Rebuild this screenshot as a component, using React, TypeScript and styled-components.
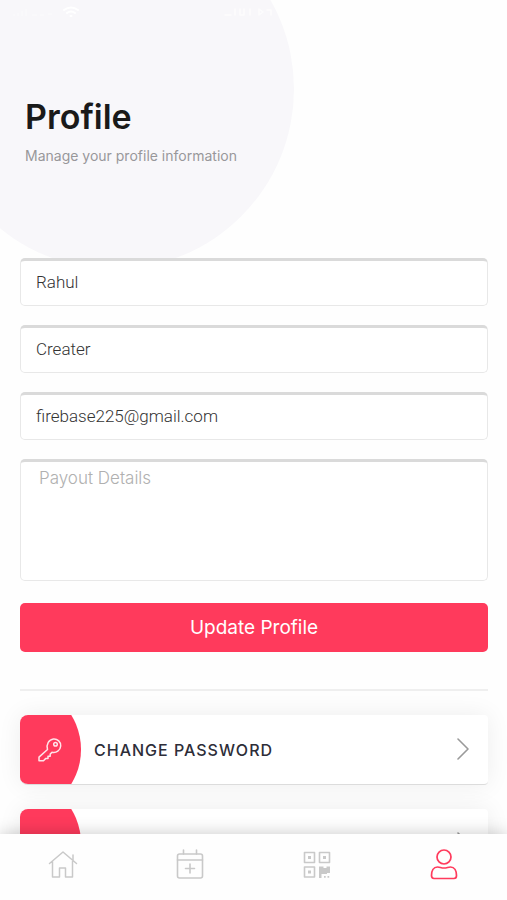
import React, { useState } from "react";
import styled, { createGlobalStyle } from "styled-components";

const accent = "#ff3a5c";

const GlobalStyle = createGlobalStyle`
  *, *::before, *::after { box-sizing: border-box; }
  html, body, #root { height: 100%; }
  body {
    margin: 0;
    background: #fefefe;
    font-family: Inter, Roboto, sans-serif;
    color: #1a1a1a;
    overflow: hidden;
  }
  button, input, textarea { font: inherit; margin: 0; }
`;

const Screen = styled.div`
  height: 100vh;
  display: flex;
  flex-direction: column;
  overflow: hidden;
`;

const Content = styled.main`
  position: relative;
  flex: 1;
  min-height: 0;
  overflow: hidden;
`;

const Blob = styled.div`
  position: absolute;
  z-index: -1;
  top: -91px;
  left: -66px;
  width: 360px;
  height: 360px;
  border-radius: 50%;
  background: #f8f7fa;
`;

const StatusBar = styled.div`
  display: flex;
  align-items: center;
  gap: 8px;
  height: 24px;
  padding: 0 12px;
  color: #fff;
`;

const StatusGroup = styled.span<{ $offset?: boolean }>`
  display: flex;
  align-items: center;
  gap: 8px;
  margin-left: ${(p) => (p.$offset ? "28%" : "0")};
`;

const Header = styled.header`
  height: 234px;
  padding: 71px 25px 0;
`;

const Title = styled.h1`
  margin: 0;
  font-size: 34px;
  line-height: 44px;
  font-weight: 600;
`;

const Subtitle = styled.p`
  margin: 7px 0 0;
  font-size: 14px;
  line-height: 20px;
  font-weight: 400;
  color: #98979a;
`;

const Form = styled.form`
  display: grid;
  gap: 19px;
  margin: 0 19px 0 20px;
  padding-bottom: 37px;
  border-bottom: 2px solid #efefef;
`;

const Field = styled.input`
  display: block;
  width: 100%;
  height: 48px;
  padding: 0 15px 3px;
  border: 1px solid #e8e8e8;
  border-top: 3px solid #dadada;
  border-radius: 5px;
  background: #fff;
  color: #333;
  font-family: Roboto, sans-serif;
  font-size: 17px;
  font-weight: 300;
  outline: none;
`;

const TextArea = styled.textarea`
  display: block;
  width: 100%;
  height: 122px;
  padding: 4px 18px;
  border: 1px solid #e8e8e8;
  border-top: 3px solid #dadada;
  border-radius: 5px;
  background: #fff;
  color: #333;
  font-size: 17px;
  line-height: 24px;
  font-weight: 300;
  resize: none;
  outline: none;
  &::placeholder { color: #b0b0b0; opacity: 1; }
`;

const SubmitButton = styled.button`
  height: 49px;
  margin-top: 3px;
  border: 0;
  border-radius: 5px;
  background: ${accent};
  color: #fff;
  font-size: 19px;
  cursor: pointer;
`;

const ActionList = styled.div`
  display: grid;
  gap: 24px;
  margin: 24px 19px 0 20px;
`;

const ActionCard = styled.button`
  display: flex;
  align-items: center;
  width: 100%;
  height: 70px;
  padding: 0 18px 0 0;
  overflow: hidden;
  border: 0;
  border-bottom: 1px solid #dcdcdc;
  border-radius: 8px 4px 4px 8px;
  background: #fff;
  box-shadow: 0 0 24px rgba(0, 0, 0, 0.07);
  color: #2d2d38;
  text-align: left;
  cursor: pointer;
`;

const ActionIcon = styled.span`
  display: flex;
  align-items: center;
  align-self: stretch;
  width: 61px;
  padding-left: 17px;
  clip-path: circle(66px at -5px 50%);
  background: ${accent};
`;

const ActionLabel = styled.span`
  flex: 1;
  padding-left: 13px;
  font-size: 16px;
  font-weight: 500;
  letter-spacing: 1px;
`;

const NavBar = styled.nav`
  position: relative;
  display: grid;
  grid-template-columns: repeat(4, 1fr);
  height: 66px;
  background: #fefefe;
  box-shadow: 0 0 16px rgba(0, 0, 0, 0.22);
`;

const NavButton = styled.button<{ $active?: boolean }>`
  display: flex;
  justify-content: center;
  padding: 15px 0 0;
  border: 0;
  background: transparent;
  color: ${(p) => (p.$active ? accent : "#c9c9c9")};
  cursor: pointer;
`;

const stroke = {
  fill: "none",
  stroke: "currentColor",
  strokeLinecap: "round" as const,
  strokeLinejoin: "round" as const,
};

const SignalIcon = () => (
  <svg width="42" height="12" viewBox="0 0 42 12" {...stroke} strokeWidth="1" opacity="0.5" aria-hidden="true">
    <path d="M2 10V8M6 10V7M10 10V5M14 10V3M20 9h5M28 9h4M36 8h4" />
  </svg>
);

const WifiIcon = () => (
  <svg width="18" height="12" viewBox="0 0 18 12" {...stroke} strokeWidth="2" aria-hidden="true">
    <path d="M2 4Q9-1 16 4M5 7q4-3 8 0M8.500 10h1" />
  </svg>
);

const BatteryIcon = () => (
  <svg width="50" height="12" viewBox="0 0 50 12" {...stroke} strokeWidth="1.500" opacity="0.7" aria-hidden="true">
    <path d="M2 9h6M12 3v6M17 3v6h4V3M27 3v6M36 3v6l4-3zM44 4h4v5" />
  </svg>
);

const KeyIcon = () => (
  <svg width="26" height="26" viewBox="0 0 26 26" {...stroke} stroke="#ffe4e9" strokeWidth="1.500" aria-hidden="true">
    <path d="M10.500 12.500C9 7 12 2.500 16.500 2c4-.3 7.500 3 7.200 7-.3 4.500-4.500 7.300-8.700 6.300l-1.800 1.800v2.100h-2.200v2.200H8.800l-2.300 2.300H2v-3.600Z" />
    <circle cx="18.500" cy="7.200" r="1.800" />
  </svg>
);

const ChevronIcon = () => (
  <svg width="14" height="24" viewBox="0 0 14 24" {...stroke} stroke="#9a9a9a" strokeWidth="1.600" aria-hidden="true">
    <path d="M2 1l10 10L2 21" />
  </svg>
);

const HomeIcon = () => (
  <svg width="32" height="32" viewBox="0 0 32 32" {...stroke} strokeWidth="1.500" aria-hidden="true">
    <path d="M2.500 14.500 16 3l13.500 11.500M5.500 12.500V28H12.500V19h6v9h7V12.500M26 11V6" />
  </svg>
);

const CalendarIcon = () => (
  <svg width="32" height="32" viewBox="0 0 32 32" {...stroke} strokeWidth="1.600" aria-hidden="true">
    <rect x="3.500" y="5" width="25" height="24" rx="2" />
    <path d="M3.500 11h25M9.500 1v4M22.500 1v4M16 15v9M11.500 19.500h9" />
  </svg>
);

const QrIcon = () => (
  <svg width="32" height="32" viewBox="0 0 32 32" {...stroke} strokeWidth="1.600" aria-hidden="true">
    <rect x="3.500" y="3.500" width="10" height="10" />
    <rect x="18.500" y="3.500" width="10" height="10" />
    <rect x="3.500" y="18" width="10" height="10" />
    <path
      d="M7 7h3v3H7zM22 7h3v3h-3zM7 21.500h3v3H7zM18 17.500h4.500V19h3v-1.500H29V24h-3v1h-5.500v4H18zM23 27h1.700v1.700H23zM26.500 27h1.700v1.700h-1.700z"
      fill="currentColor"
      stroke="none"
    />
  </svg>
);

const UserIcon = () => (
  <svg width="32" height="32" viewBox="0 0 32 32" {...stroke} strokeWidth="1.700" aria-hidden="true">
    <circle cx="16" cy="8" r="7" />
    <path d="M9.500 18c2.500 0 3.500 1 6.500 1s4-1 6.500-1c4 0 6 4 6 8.500 0 2-.8 3-2.500 3H6c-1.700 0-2.500-1-2.500-3C3.500 22 5.500 18 9.500 18Z" />
  </svg>
);

export default function App() {
  const [name, setName] = useState("Rahul");
  const [role, setRole] = useState("Creater");
  const [email, setEmail] = useState("firebase225@gmail.com");

  return (
    <Screen>
      <GlobalStyle />
      <Content>
        <Blob />
        <StatusBar>
          <StatusGroup>
            <SignalIcon />
            <WifiIcon />
          </StatusGroup>
          <StatusGroup $offset>
            <BatteryIcon />
          </StatusGroup>
        </StatusBar>
        <Header>
          <Title>Profile</Title>
          <Subtitle>Manage your profile information</Subtitle>
        </Header>
        <Form onSubmit={(e) => e.preventDefault()}>
          <Field aria-label="First name" value={name} onChange={(e) => setName(e.target.value)} />
          <Field aria-label="Last name" value={role} onChange={(e) => setRole(e.target.value)} />
          <Field aria-label="Email" type="email" value={email} onChange={(e) => setEmail(e.target.value)} />
          <TextArea aria-label="Payout details" placeholder="Payout Details" />
          <SubmitButton type="submit">Update Profile</SubmitButton>
        </Form>
        <ActionList>
          <ActionCard type="button">
            <ActionIcon>
              <KeyIcon />
            </ActionIcon>
            <ActionLabel>CHANGE PASSWORD</ActionLabel>
            <ChevronIcon />
          </ActionCard>
          <ActionCard type="button" aria-label="More">
            <ActionIcon />
            <ActionLabel />
            <ChevronIcon />
          </ActionCard>
        </ActionList>
      </Content>
      <NavBar aria-label="Main">
        <NavButton type="button" aria-label="Home">
          <HomeIcon />
        </NavButton>
        <NavButton type="button" aria-label="Add event">
          <CalendarIcon />
        </NavButton>
        <NavButton type="button" aria-label="QR code">
          <QrIcon />
        </NavButton>
        <NavButton type="button" aria-label="Profile" aria-current="page" $active>
          <UserIcon />
        </NavButton>
      </NavBar>
    </Screen>
  );
}
